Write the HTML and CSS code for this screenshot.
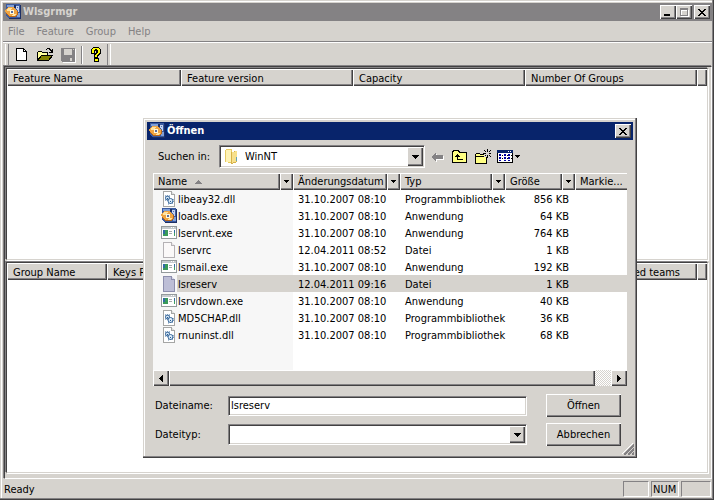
FILE: index.html
```html
<!DOCTYPE html>
<html lang="de">

<head>
    <meta charset="UTF-8">
    <meta name="viewport" content="width=device-width, initial-scale=1.0">
    <title>Wlsgrmgr</title>
    <link rel="stylesheet" href="styles.css">
</head>

<body>
    <!-- Shared icons -->
    <svg class="sprite" aria-hidden="true">
        <symbol id="i-app" viewBox="0 0 16 16">
            <path fill="#3a5aa0" d="M1 0h14v15H4l-3-3z"/>
            <path fill="#7f9fd6" d="M2 1h8v2H2zM12 9h3v4h-3z"/>
            <path fill="#1c2f66" d="M9 1h2v3H9zM15 1h1v14h-1zM4 14h12v1H4z"/>
            <path fill="#c6d3ef" d="M11 2h3v3h-3zM12 5h2v3h-2z"/>
            <path fill="#4a6fb8" d="M12 3h1v1h-1zM12 6h1v2h-1z"/>
            <path fill="#b5651a" d="M1 6l3-2h5l4 3v4l-3 2H5l-4-3z"/>
            <path fill="#f0a542" d="M0 6l3-3h5l4 3v4l-2 2H5L1 9z"/>
            <path fill="#ffe3a0" d="M1 6l3-2h3l-1 3H2zM8 10h3l-1 2H7z"/>
            <path fill="#fff7dd" d="M5 6h4v4H5z"/>
            <path fill="#5a6f9c" d="M6 7h2v2H6z"/>
        </symbol>
        <symbol id="i-dll" viewBox="0 0 16 16">
            <path fill="#fff" stroke="#a5a6a5" d="M2.500.5h8l3 3v12h-11z"/>
            <path fill="#dedfde" stroke="#a5a6a5" d="M10.500.5v3h3"/>
            <g shape-rendering="auto" fill="#dcebf7" stroke="#39699c">
                <circle cx="6.500" cy="7" r="2"/>
                <circle cx="9.500" cy="10" r="2.500"/>
                <path stroke-dasharray="1 1" fill="none" d="M4 5l5 0M4 9h3M7 13l5-1M12 8v4"/>
            </g>
            <path fill="#215a94" d="M6 6.500h1v1H6zM9 9.500h1v1H9z"/>
        </symbol>
        <symbol id="i-exe" viewBox="0 0 16 16">
            <path fill="#fff" stroke="#949a9c" d="M.5 1.500h15v12H.5z"/>
            <path fill="#c6cbce" d="M1 2h14v2H1z"/>
            <path fill="#fff" d="M10 2h1v1h-1zM12 2h1v1h-1z"/>
            <path fill="#399a5a" d="M2 5h5v6H2z"/>
            <path fill="#3169a5" d="M2 5h2v4H2z"/>
            <path fill="#a5aaad" d="M8 6h3v1H8zM8 8h3v1H8z"/>
            <path fill="#316d9c" d="M13 5h1v3h-1z"/>
            <path fill="#42a263" d="M13 8h1v3h-1z"/>
        </symbol>
        <symbol id="i-file" viewBox="0 0 16 16">
            <path fill="#fbf9f9" stroke="#b5b2b5" d="M2.500.5h8l3 3v12h-11z"/>
            <path fill="#e7e3e7" stroke="#b5b2b5" d="M10.500.5v3h3"/>
        </symbol>
        <symbol id="i-file-sel" viewBox="0 0 16 16">
            <path fill="#bdbed6" stroke="#8c8ead" d="M2.500.5h8l3 3v12h-11z"/>
            <path fill="#d6d7e7" stroke="#8c8ead" d="M10.500.5v3h3"/>
        </symbol>
        <symbol id="i-down" viewBox="0 0 7 4">
            <path d="M0 0h7v1H6v1H5v1H4v1H3V3H2V2H1V1H0z"/>
        </symbol>
        <symbol id="i-down-small" viewBox="0 0 5 3">
            <path d="M0 0h5v1H4v1H3v1H2V2H1V1H0z"/>
        </symbol>
        <symbol id="i-close" viewBox="0 0 8 7">
            <path d="M0 0h2v1h1v1h2V1h1V0h2v1H7v1H6v1H5v1h1v1h1v1h1v1H6V6H5V5H3v1H2v1H0V6h1V5h1V4h1V3H2V2H1V1H0z"/>
        </symbol>
    </svg>

    <main class="window">
        <header class="titlebar titlebar--inactive">
            <svg class="icon" aria-hidden="true"><use href="#i-app"/></svg>
            <h1 class="titlebar__text">Wlsgrmgr</h1>
            <button class="caption-btn" aria-label="Minimize">
                <svg width="8" height="7" aria-hidden="true"><path d="M0 5h6v2H0z"/></svg>
            </button>
            <button class="caption-btn" aria-label="Maximize" disabled>
                <svg width="9" height="9" aria-hidden="true"><path fill="none" stroke="#fff" d="M1.500 2.500h7v6h-7z"/><path fill="none" stroke="#848284" d="M.5.5h7v7h-7zM1 1.500h7"/></svg>
            </button>
            <button class="caption-btn caption-btn--close" aria-label="Close">
                <svg width="8" height="7" aria-hidden="true"><use href="#i-close"/></svg>
            </button>
        </header>

        <nav class="menu">
            <button class="menu__item">File</button>
            <button class="menu__item">Feature</button>
            <button class="menu__item">Group</button>
            <button class="menu__item">Help</button>
        </nav>

        <div class="toolbar">
            <button class="tool" aria-label="New">
                <svg class="icon" viewBox="0 0 16 16" aria-hidden="true"><path fill="#fff" stroke="#000" d="M2.500 1.500h7l3 3v9h-10z"/><path fill="none" stroke="#000" d="M9.500 1.500v3h3"/></svg>
            </button>
            <button class="tool" aria-label="Open">
                <svg class="icon" viewBox="0 0 16 16" aria-hidden="true">
                    <path fill="#ffff9c" stroke="#000" d="M.5 13.500v-8l1-1h3l1 1h5v3h-5z"/>
                    <path fill="#848200" stroke="#000" d="M.5 13.500l4-5h11l-4 5z"/>
                    <path d="M9 2h1V1h3v1h1v1h1V2h1v4h-4V5h2V4h-1V3h-1V2h-2v1H9z"/>
                </svg>
            </button>
            <button class="tool" aria-label="Save" disabled>
                <svg class="icon" viewBox="0 0 16 16" aria-hidden="true">
                    <path fill="#fff" d="M2 2h14v14H3z"/>
                    <path fill="#848284" d="M1 1h14v14H2l-1-1z"/>
                    <path fill="#d6d3ce" d="M4 2h8v6H4zM13 2h1v1h-1zM10 11h2v3h-2z"/>
                </svg>
            </button>
            <span class="toolbar__sep"></span>
            <button class="tool" aria-label="Help">
                <svg class="icon" viewBox="0 0 16 16" aria-hidden="true">
                    <path d="M5 0h6v1h1v1h1v5h-1v1h-1v1h-1v2H6V7h1V6h1V4H7v3H3V2h1V1h1zM6 11h5v4H6z"/>
                    <path fill="#ffff00" d="M5 1h6v1h1v4h-1v1h-1v1H9v2H7V8h1V7h1V6h1V3H9V2H7v1H6v3H4V2h1zM7 12h3v2H7z"/>
                </svg>
            </button>
        </div>

        <div class="client">
            <section class="pane">
                <table class="report">
                    <colgroup>
                        <col class="col-feature"><col class="col-std"><col class="col-std"><col class="col-std"><col>
                    </colgroup>
                    <thead>
                        <tr>
                            <th scope="col">Feature Name</th>
                            <th scope="col">Feature version</th>
                            <th scope="col">Capacity</th>
                            <th scope="col">Number Of Groups</th>
                            <td></td>
                        </tr>
                    </thead>
                </table>
            </section>
            <section class="pane">
                <table class="report">
                    <colgroup>
                        <col class="col-group"><col class="col-keys"><col class="col-teams"><col>
                    </colgroup>
                    <thead>
                        <tr>
                            <th scope="col">Group Name</th>
                            <th scope="col">Keys Reserved</th>
                            <th scope="col">Reserved teams</th>
                            <td></td>
                        </tr>
                    </thead>
                </table>
            </section>
        </div>

        <footer class="status">
            <span class="status__text">Ready</span>
            <span class="status__pane"></span>
            <span class="status__pane">NUM</span>
            <span class="status__pane status__pane--last"></span>
        </footer>
    </main>

    <!-- Open file dialog -->
    <div class="dialog" role="dialog" aria-labelledby="dialog-title">
        <header class="titlebar">
            <svg class="icon" aria-hidden="true"><use href="#i-app"/></svg>
            <h2 class="titlebar__text" id="dialog-title">Öffnen</h2>
            <button class="caption-btn caption-btn--close" aria-label="Schließen">
                <svg width="8" height="7" aria-hidden="true"><use href="#i-close"/></svg>
            </button>
        </header>

        <div class="lookin">
            <label class="lookin__label" for="folder">Suchen in:</label>
            <div class="combo combo--folder">
                <select id="folder">
                    <option>WinNT</option>
                </select>
                <svg class="combo__icon" viewBox="0 0 16 16" aria-hidden="true">
                    <path fill="#e7cb63" d="M1 2l1-1h5l1 1v12l-2 1-5-1z"/>
                    <path fill="#fff3b5" d="M2 2h5v12H2z"/>
                    <path fill="#d6b24a" d="M7 4l6-1v11l-6 2z"/>
                    <path fill="#f7e08c" d="M8 4l5-1v10l-5 2z"/>
                    <path fill="#63a2b5" d="M12 9h1v4h-1z"/>
                </svg>
                <span class="combo__arrow"><svg width="7" height="4" aria-hidden="true"><use href="#i-down"/></svg></span>
            </div>
            <div class="lookin__tools">
                <button class="tool" aria-label="Zurück" disabled>
                    <svg class="icon" viewBox="0 0 16 16" aria-hidden="true"><path fill="#fff" d="M3 9l5-5v3h7v4H8v3z"/><path fill="#848284" d="M2 8l5-5v3h7v4H7v3z"/></svg>
                </button>
                <button class="tool" aria-label="Übergeordneter Ordner">
                    <svg class="icon" viewBox="0 0 16 16" aria-hidden="true"><path fill="#ffff84" stroke="#000" d="M.5 13.500v-10l1-2h5l1 2h7v10z"/><path d="M5 5h1v1h1v1h1v1H6v2h5v1H5V8H3V7h1V6h1z"/></svg>
                </button>
                <button class="tool" aria-label="Neuer Ordner">
                    <svg class="icon" viewBox="0 0 16 16" aria-hidden="true"><path fill="#ffff84" stroke="#000" d="M.5 14.500v-9l1-1h3l1 1h6v9z"/><path fill="none" stroke="#000" d="M.5 7.500h10"/><path fill="#d6d3ce" d="M9 2h7v6H9z"/><path d="M12 0h1v3h-1zM12 6h1v3h-1zM8 4h3v1H8zM14 4h2v1h-2zM10 2h1v1h-1zM14 2h1v1h-1zM15 1h1v1h-1zM9 1h1v1H9zM10 6h1v1h-1zM14 6h1v1h-1zM15 7h1v1h-1z"/></svg>
                </button>
                <button class="tool tool--view" aria-label="Ansicht">
                    <svg class="icon" viewBox="0 0 16 16" aria-hidden="true"><path fill="#fff" stroke="#000" d="M.5 1.500h15v12H.5z"/><path fill="#08246b" d="M0 1h16v3H0z"/><path fill="#fff" d="M11 2h1v1h-1zM13 2h1v1h-1z"/><path fill="#0000a5" d="M2 5h2v2H2zM7 5h2v2H7zM11 5h2v2h-2zM2 8h2v2H2zM7 8h2v2H7zM11 8h2v2h-2zM2 11h2v1H2zM7 11h2v1H7zM11 11h2v1h-2z"/><path d="M5 6h1v1H5zM10 6h1v1h-1zM14 6h1v1h-1zM5 9h1v1H5zM10 9h1v1h-1zM14 9h1v1h-1z"/></svg>
                    <svg width="5" height="3" aria-hidden="true"><use href="#i-down-small"/></svg>
                </button>
            </div>
        </div>

        <div class="files">
            <table class="files__table">
                <colgroup>
                    <col class="col-name"><col class="col-date"><col class="col-type"><col class="col-size"><col>
                </colgroup>
                <thead>
                    <tr>
                        <th scope="col">
                            <div class="head">
                                <button class="head__label">Name <svg width="7" height="4" aria-hidden="true"><path fill="#848284" d="M3 0h1v1h1v1h1v1h1v1H0V3h1V2h1V1h1z"/></svg></button>
                                <button class="head__filter" aria-label="Name filtern"><svg width="5" height="3" aria-hidden="true"><use href="#i-down-small"/></svg></button>
                            </div>
                        </th>
                        <th scope="col">
                            <div class="head">
                                <button class="head__label">Änderungsdatum</button>
                                <button class="head__filter" aria-label="Datum filtern"><svg width="5" height="3" aria-hidden="true"><use href="#i-down-small"/></svg></button>
                            </div>
                        </th>
                        <th scope="col">
                            <div class="head">
                                <button class="head__label">Typ</button>
                                <button class="head__filter" aria-label="Typ filtern"><svg width="5" height="3" aria-hidden="true"><use href="#i-down-small"/></svg></button>
                            </div>
                        </th>
                        <th scope="col">
                            <div class="head">
                                <button class="head__label">Größe</button>
                                <button class="head__filter" aria-label="Größe filtern"><svg width="5" height="3" aria-hidden="true"><use href="#i-down-small"/></svg></button>
                            </div>
                        </th>
                        <th scope="col">
                            <div class="head">
                                <button class="head__label head__label--last">Markie...</button>
                            </div>
                        </th>
                    </tr>
                </thead>
                <tbody>
                    <tr>
                        <td><div class="file"><svg class="icon" aria-hidden="true"><use href="#i-dll"/></svg><span class="file__name">libeay32.dll</span></div></td>
                        <td>31.10.2007 08:10</td><td>Programmbibliothek</td><td>856 KB</td><td></td>
                    </tr>
                    <tr>
                        <td><div class="file"><svg class="icon" aria-hidden="true"><use href="#i-app"/></svg><span class="file__name">loadls.exe</span></div></td>
                        <td>31.10.2007 08:10</td><td>Anwendung</td><td>64 KB</td><td></td>
                    </tr>
                    <tr>
                        <td><div class="file"><svg class="icon" aria-hidden="true"><use href="#i-exe"/></svg><span class="file__name">lservnt.exe</span></div></td>
                        <td>31.10.2007 08:10</td><td>Anwendung</td><td>764 KB</td><td></td>
                    </tr>
                    <tr>
                        <td><div class="file"><svg class="icon" aria-hidden="true"><use href="#i-file"/></svg><span class="file__name">lservrc</span></div></td>
                        <td>12.04.2011 08:52</td><td>Datei</td><td>1 KB</td><td></td>
                    </tr>
                    <tr>
                        <td><div class="file"><svg class="icon" aria-hidden="true"><use href="#i-exe"/></svg><span class="file__name">lsmail.exe</span></div></td>
                        <td>31.10.2007 08:10</td><td>Anwendung</td><td>192 KB</td><td></td>
                    </tr>
                    <tr class="is-selected">
                        <td><div class="file"><svg class="icon" aria-hidden="true"><use href="#i-file-sel"/></svg><span class="file__name">lsreserv</span></div></td>
                        <td>12.04.2011 09:16</td><td>Datei</td><td>1 KB</td><td></td>
                    </tr>
                    <tr>
                        <td><div class="file"><svg class="icon" aria-hidden="true"><use href="#i-exe"/></svg><span class="file__name">lsrvdown.exe</span></div></td>
                        <td>31.10.2007 08:10</td><td>Anwendung</td><td>40 KB</td><td></td>
                    </tr>
                    <tr>
                        <td><div class="file"><svg class="icon" aria-hidden="true"><use href="#i-dll"/></svg><span class="file__name">MD5CHAP.dll</span></div></td>
                        <td>31.10.2007 08:10</td><td>Programmbibliothek</td><td>36 KB</td><td></td>
                    </tr>
                    <tr>
                        <td><div class="file"><svg class="icon" aria-hidden="true"><use href="#i-dll"/></svg><span class="file__name">rnuninst.dll</span></div></td>
                        <td>31.10.2007 08:10</td><td>Programmbibliothek</td><td>68 KB</td><td></td>
                    </tr>
                    <tr class="files__rest"><td></td><td></td><td></td><td></td><td></td></tr>
                </tbody>
            </table>
            <div class="scrollbar">
                <button class="scrollbar__btn" aria-label="Nach links"><svg width="4" height="7" aria-hidden="true"><path d="M3 0h1v7H3V6H2V5H1V4H0V3h1V2h1V1h1z"/></svg></button>
                <span class="scrollbar__thumb"></span>
                <span class="scrollbar__track"></span>
                <button class="scrollbar__btn" aria-label="Nach rechts"><svg width="4" height="7" aria-hidden="true"><path d="M0 0h1v1h1v1h1v1h1v1H3v1H2v1H1v1H0z"/></svg></button>
            </div>
        </div>

        <form class="form">
            <label for="filename">Dateiname:</label>
            <input class="form__input" type="text" id="filename" value="lsreserv">
            <button class="btn" type="button">Öffnen</button>
            <label for="filetype">Dateityp:</label>
            <div class="combo">
                <select id="filetype">
                    <option></option>
                </select>
                <span class="combo__arrow"><svg width="7" height="4" aria-hidden="true"><use href="#i-down"/></svg></span>
            </div>
            <button class="btn" type="button">Abbrechen</button>
        </form>

        <svg class="grip" width="12" height="12" aria-hidden="true">
            <path stroke="#fff" d="M0 11L11 0M4 11l7-7M8 11l3-3"/>
            <path stroke="#848284" stroke-width="2" d="M2 12L12 2M6 12l6-6M10 12l2-2"/>
        </svg>
    </div>
</body>

</html>
```
FILE: styles.css
```css
:root {
    --face: #d6d3ce;
    --light: #fff;
    --shadow: #848284;
    --dark: #424142;
    --active: #08246b;
    --ff: 'DejaVu Sans Condensed', 'DejaVu Sans', Tahoma, sans-serif;
    --fs: 11px;
    --raised: inset 1px 1px var(--light), inset -1px -1px var(--dark), inset -2px -2px var(--shadow);
}

* {
    margin: 0;
    padding: 0;
    box-sizing: border-box;
}

body {
    position: relative;
    height: 100vh;
    background: var(--face);
    color: #000;
    font-family: var(--ff);
    font-size: var(--fs);
    line-height: 16px;
    overflow: hidden;
}

button,
input,
select {
    font: inherit;
    color: inherit;
    border: 0;
    border-radius: 0;
    background: transparent;
    outline: none;
}

svg {
    display: block;
    flex: none;
    shape-rendering: crispEdges;
}

table {
    width: 100%;
    table-layout: fixed;
    border-collapse: collapse;
}

th {
    font-weight: normal;
    text-align: left;
}

.sprite {
    position: absolute;
    width: 0;
    height: 0;
}

.icon {
    width: 16px;
    height: 16px;
}

/* main window */
.window {
    display: flex;
    flex-direction: column;
    height: 100%;
    padding: 3px 2px 2px 3px;
    box-shadow: inset -1px -1px var(--dark), inset -2px -2px var(--shadow), inset 1px 1px var(--face), inset 2px 2px var(--light);
}

.titlebar {
    display: flex;
    align-items: center;
    height: 18px;
    padding: 0 2px;
    background: var(--active);
    color: #fff;
}

.titlebar--inactive {
    background: var(--shadow);
    color: var(--face);
}

.titlebar__text {
    flex: 1;
    padding-left: 2px;
    font-size: var(--fs);
    font-weight: bold;
}

.caption-btn {
    display: flex;
    align-items: center;
    justify-content: center;
    width: 16px;
    height: 14px;
    background: var(--face);
    color: #000;
    box-shadow: var(--raised);
}

.caption-btn--close {
    margin-left: 2px;
}

.menu {
    display: flex;
    height: 20px;
    padding: 1px 0 0 5px;
}

.menu__item {
    margin-right: 12px;
    color: var(--shadow);
}

.toolbar {
    display: flex;
    align-items: center;
    height: 24px;
    padding: 2px 0 0 8px;
    border-top: 1px solid var(--shadow);
    box-shadow: inset 0 1px var(--light);
}

.toolbar::before,
.toolbar::after {
    content: '';
    width: 2px;
    height: 22px;
    border: solid;
    border-width: 0 1px;
}

.toolbar::before {
    margin: 0 1px 0 -6px;
    border-color: var(--light) var(--shadow);
    border-left-color: var(--light);
}

.toolbar::after {
    border-right-color: var(--light);
    border-left-color: var(--shadow);
}

.tool {
    display: flex;
    align-items: center;
    justify-content: center;
    width: 23px;
    height: 22px;
}

.toolbar__sep {
    width: 2px;
    height: 18px;
    margin: 0 1px 0 2px;
    border-left: 1px solid var(--shadow);
    border-right: 1px solid var(--light);
}

.client {
    flex: 1;
    display: grid;
    grid-template-rows: 10fr 11fr;
    min-height: 0;
    margin: 1px 0 0 1px;
    padding: 0 2px 4px 0;
    border: 1px solid;
    border-color: var(--dark) var(--light) var(--light) var(--dark);
    box-shadow: -1px -1px var(--shadow);
}

.pane {
    margin: 1px 1px 1px 1px;
    background: #fff;
    border: 1px solid;
    border-color: var(--dark) var(--face) var(--face) var(--dark);
    box-shadow: -1px -1px var(--shadow), 1px 1px var(--light);
    overflow: hidden;
}

.report th,
.report td {
    height: 17px;
    padding: 2px 6px 0;
    line-height: 15px;
    white-space: nowrap;
    background: var(--face);
    box-shadow: var(--raised);
}

.col-feature {
    width: 174px;
}

.col-std {
    width: 172px;
}

.col-group {
    width: 100px;
}

.col-keys {
    width: 487px;
}

.col-teams {
    width: 103px;
}

.status {
    display: flex;
    gap: 2px;
    height: 19px;
    padding: 2px 1px 1px 1px;
}

.status__text {
    flex: 1;
    padding-top: 1px;
}

.status__pane {
    width: 26px;
    padding-left: 1px;
    border: 1px solid;
    border-color: var(--shadow) var(--light) var(--light) var(--shadow);
    line-height: 15px;
}

.status__pane:nth-of-type(3) {
    width: 28px;
}

.status__pane--last {
    width: 30px;
}

/* open dialog, floats over the window */
.dialog {
    position: absolute;
    top: 118px;
    left: 143px;
    right: 77px;
    padding: 4px;
    background: var(--face);
    box-shadow: inset -1px -1px var(--dark), inset -2px -2px var(--shadow), inset 1px 1px var(--face), inset 2px 2px var(--light);
}

.lookin {
    display: flex;
    align-items: center;
    padding: 5px 6px 5px 11px;
}

.lookin__label {
    width: 61px;
}

.combo {
    position: relative;
    height: 21px;
    padding: 1px;
    border: 1px solid;
    border-color: var(--shadow) var(--light) var(--light) var(--shadow);
    background: #fff;
    box-shadow: inset 1px 1px var(--dark), inset -1px -1px var(--face);
}

.combo--folder {
    flex: 1;
    height: 23px;
}

.combo select {
    display: block;
    width: 100%;
    height: 100%;
    padding-left: 3px;
    appearance: none;
}

.combo--folder select {
    padding-left: 24px;
}

.combo__icon {
    position: absolute;
    top: 2px;
    left: 4px;
    width: 16px;
    height: 16px;
}

.combo__arrow {
    position: absolute;
    top: 1px;
    right: 1px;
    bottom: 1px;
    display: flex;
    align-items: center;
    justify-content: center;
    width: 16px;
    background: var(--face);
    box-shadow: var(--raised);
    pointer-events: none;
}

.lookin__tools {
    display: flex;
    width: 202px;
}

.tool--view {
    gap: 2px;
    width: 28px;
}

.files {
    margin: 0 6px;
    background: #fff;
}

.head {
    display: flex;
    height: 17px;
    background: var(--face);
}

.head__label,
.head__filter {
    display: flex;
    align-items: center;
    box-shadow: var(--raised);
}

.head__label {
    flex: 1;
    gap: 8px;
    min-width: 0;
    padding: 1px 0 0 5px;
    white-space: nowrap;
}

.head__label--last {
    box-shadow: inset 1px 1px var(--light), inset 0 -1px var(--dark), inset 0 -2px var(--shadow);
}

.head__filter {
    justify-content: center;
    width: 13px;
}

.files td {
    height: 17px;
    padding: 2px 0 0 5px;
    line-height: 15px;
    white-space: nowrap;
}

.files td:first-child {
    padding: 0 0 0 8px;
    background: #f7f7f7;
}

.files td:nth-child(4) {
    padding: 2px 6px 0 0;
    text-align: right;
}

.files .files__rest td {
    height: 27px;
}

.file {
    display: flex;
    align-items: center;
    height: 17px;
}

.file__name {
    flex: 1;
    padding: 2px 0 0 1px;
}

.is-selected td:not(:first-child),
.is-selected .file__name {
    background: var(--face);
}

.col-name {
    width: 140px;
}

.col-date {
    width: 107px;
}

.col-type {
    width: 105px;
}

.col-size {
    width: 70px;
}

.scrollbar {
    display: flex;
    height: 16px;
}

.scrollbar__btn {
    display: flex;
    align-items: center;
    justify-content: center;
    width: 16px;
    background: var(--face);
    box-shadow: var(--raised);
}

.scrollbar__thumb {
    flex: 1;
    background: var(--face);
    box-shadow: var(--raised);
}

.scrollbar__track {
    width: 16px;
    background: repeating-conic-gradient(var(--face) 0 25%, #fff 0 50%) 0 0 / 2px 2px;
}

.form {
    display: grid;
    grid-template-columns: 73px 1fr 75px;
    grid-auto-rows: 23px;
    row-gap: 6px;
    align-items: center;
    padding: 8px 12px 8px 8px;
}

.form__input,
.form .combo {
    margin-right: 19px;
}

.form__input {
    height: 20px;
    padding-left: 2px;
    background: #fff;
    border: 1px solid;
    border-color: var(--shadow) var(--light) var(--light) var(--shadow);
    box-shadow: inset 1px 1px var(--dark), inset -1px -1px var(--face);
}

.btn {
    height: 23px;
    text-align: center;
    box-shadow: var(--raised);
}

.grip {
    position: absolute;
    right: 3px;
    bottom: 3px;
}
```
